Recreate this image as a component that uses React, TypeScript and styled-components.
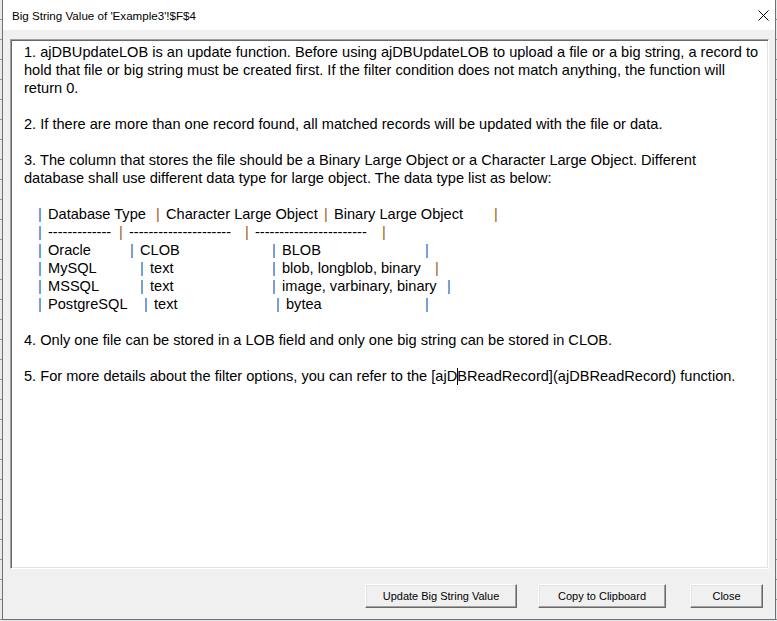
import React from "react";
import styled, { createGlobalStyle } from "styled-components";

const GlobalStyle = createGlobalStyle`
  html, body {
    margin: 0;
    padding: 0;
    background: #e4e6e9;
  }
  body {
    font-family: "Liberation Sans", Arial, sans-serif;
    color: #000;
  }
`;

const Page = styled.div`
  display: flex;
  width: 777px;
  height: 621px;
  overflow: hidden;
`;

const SheetEdge = styled.div<{ $w: number }>`
  width: ${(p) => p.$w}px;
  flex: none;
  background: repeating-linear-gradient(
    to bottom,
    #e8e9eb 0px,
    #e8e9eb 19px,
    #8d8f92 19px,
    #8d8f92 20px
  );
`;

const Window = styled.div`
  flex: 1;
  display: flex;
  flex-direction: column;
  border: 1px solid #717171;
  border-top: none;
  margin-bottom: 1px;
  background: #f0f0f0;
`;

const TitleBar = styled.div`
  height: 30px;
  flex: none;
  display: flex;
  align-items: center;
  justify-content: space-between;
  background: #fff;
  padding-left: 9px;
  font-size: 11.6px;
`;

const CloseBox = styled.div`
  width: 24px;
  height: 30px;
  display: flex;
  align-items: center;
  justify-content: center;
  padding-top: 1px;
`;

const Body = styled.div`
  flex: 1;
  display: flex;
  flex-direction: column;
  padding: 9px 6px 11px 7px;
`;

const TextBox = styled.div`
  flex: 1;
  background: #fff;
  border: 1px solid;
  border-color: #a0a0a0 #fff #fff #a0a0a0;
  box-shadow: inset 1px 1px 0 #696969, inset -1px -1px 0 #e3e3e3;
  padding: 3px 4px 0 13px;
  font-size: 14.6px;
  line-height: 18px;
`;

const Line = styled.div`
  height: 18px;
  white-space: pre;
`;

const TableRow = styled.div`
  height: 18px;
  display: flex;
  white-space: pre;
  padding-left: 14px;
`;

const Cell = styled.span<{ $w: number }>`
  display: inline-flex;
  width: ${(p) => p.$w}px;
  flex: none;
`;

const Pipe = styled.span<{ $tone: "b" | "o" }>`
  display: inline-block;
  width: 10px;
  flex: none;
  color: ${(p) => (p.$tone === "o" ? "#a0600f" : "#2a6cb0")};
`;

const Caret = styled.span`
  display: inline-block;
  width: 1px;
  height: 17px;
  margin: 0 -0.5px;
  vertical-align: -4px;
  background: #000;
`;

const ButtonBar = styled.div`
  flex: none;
  display: flex;
  justify-content: flex-end;
  margin-top: 15px;
  padding-right: 6px;
`;

const Button = styled.button<{ $w: number; $gap: number }>`
  width: ${(p) => p.$w}px;
  height: 24px;
  margin-left: ${(p) => p.$gap}px;
  padding: 0;
  background: #f0f0f0;
  border: 1px solid;
  border-color: #fff #696969 #696969 #fff;
  box-shadow: inset -1px -1px 0 #a0a0a0, inset 1px 1px 0 #e3e3e3;
  font-family: "Liberation Sans", Arial, sans-serif;
  font-size: 11px;
  color: #000;
`;

type Tone = "b" | "o";
type Row = { cells: [string, number, Tone][]; end: Tone };

const rows: Row[] = [
  {
    cells: [
      ["Database Type", 118, "b"],
      ["Character Large Object", 168, "o"],
      ["Binary Large Object", 170, "o"],
    ],
    end: "o",
  },
  {
    cells: [
      ["-------------", 81, "b"],
      ["---------------------", 126, "o"],
      ["-----------------------", 137, "o"],
    ],
    end: "o",
  },
  {
    cells: [
      ["Oracle", 92, "b"],
      ["CLOB", 142, "b"],
      ["BLOB", 153, "b"],
    ],
    end: "b",
  },
  {
    cells: [
      ["MySQL", 102, "b"],
      ["text", 132, "b"],
      ["blob, longblob, binary", 163, "b"],
    ],
    end: "o",
  },
  {
    cells: [
      ["MSSQL", 102, "b"],
      ["text", 132, "b"],
      ["image, varbinary, binary", 175, "b"],
    ],
    end: "b",
  },
  {
    cells: [
      ["PostgreSQL", 106, "b"],
      ["text", 132, "b"],
      ["bytea", 149, "b"],
    ],
    end: "b",
  },
];

const CloseIcon = () => (
  <svg width="11" height="11" viewBox="0 0 11 11">
    <path d="M0.5 0.5 L10.5 10.5 M10.5 0.5 L0.5 10.5" stroke="#000" strokeWidth="1" fill="none" />
  </svg>
);

export default function App() {
  return (
    <Page>
      <GlobalStyle />
      <SheetEdge $w={2} />
      <Window>
        <TitleBar>
          <span>Big String Value of 'Example3'!$F$4</span>
          <CloseBox>
            <CloseIcon />
          </CloseBox>
        </TitleBar>
        <Body>
          <TextBox>
            <Line>1. ajDBUpdateLOB is an update function. Before using ajDBUpdateLOB to upload a file or a big string, a record to</Line>
            <Line>hold that file or big string must be created first. If the filter condition does not match anything, the function will</Line>
            <Line>return 0.</Line>
            <Line> </Line>
            <Line>2. If there are more than one record found, all matched records will be updated with the file or data.</Line>
            <Line> </Line>
            <Line>3. The column that stores the file should be a Binary Large Object or a Character Large Object. Different</Line>
            <Line>database shall use different data type for large object. The data type list as below:</Line>
            <Line> </Line>
            {rows.map((row, i) => (
              <TableRow key={i}>
                {row.cells.map(([text, w, tone], j) => (
                  <Cell key={j} $w={w}>
                    <Pipe $tone={tone}>|</Pipe>
                    {text}
                  </Cell>
                ))}
                <Pipe $tone={row.end}>|</Pipe>
              </TableRow>
            ))}
            <Line> </Line>
            <Line>4. Only one file can be stored in a LOB field and only one big string can be stored in CLOB.</Line>
            <Line> </Line>
            <Line>
              5. For more details about the filter options, you can refer to the [ajD<Caret />BReadRecord](ajDBReadRecord) function.
            </Line>
          </TextBox>
          <ButtonBar>
            <Button $w={152} $gap={0}>Update Big String Value</Button>
            <Button $w={128} $gap={21}>Copy to Clipboard</Button>
            <Button $w={73} $gap={24}>Close</Button>
          </ButtonBar>
        </Body>
      </Window>
      <SheetEdge $w={1} />
    </Page>
  );
}
